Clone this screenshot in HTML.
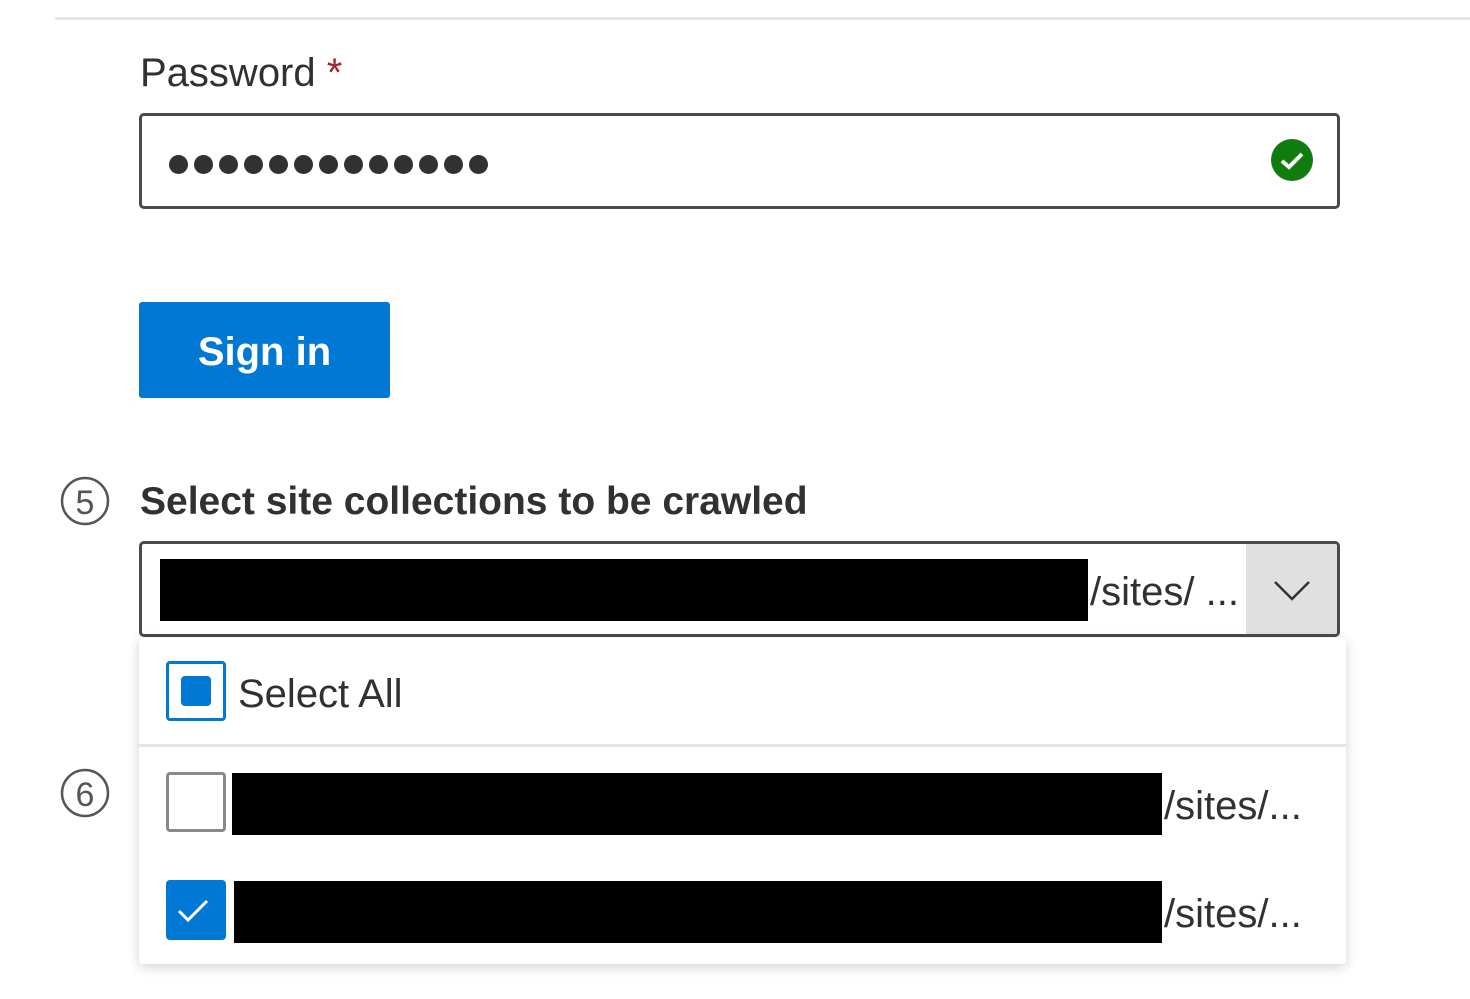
<!DOCTYPE html>
<html><head><style>
body{margin:0;width:1470px;height:999px;background:#fff;position:relative;overflow:hidden;font-family:"Segoe UI","Liberation Sans",sans-serif;color:#323130}
.a{position:absolute}
.d{display:inline-block;width:19px;height:19px;border-radius:50%;background:#323130;margin-right:6px}
</style></head><body>
<div class="a" style="left:55px;top:17px;width:1415px;height:3px;background:#e6e6e6"></div>
<div class="a" style="left:140px;top:48px;font-size:40px;line-height:50px">Password <span style="color:#a4262c">*</span></div>
<div class="a" style="left:139px;top:113px;width:1195px;height:90px;border:3px solid #4a4a4a;border-radius:5px"></div>
<div class="a" style="left:169px;top:155px;height:20px;white-space:nowrap;font-size:0"><span class="d"></span><span class="d"></span><span class="d"></span><span class="d"></span><span class="d"></span><span class="d"></span><span class="d"></span><span class="d"></span><span class="d"></span><span class="d"></span><span class="d"></span><span class="d"></span><span class="d"></span></div>
<svg class="a" style="left:1270px;top:138px" width="44" height="44"><circle cx="22" cy="22" r="21" fill="#107c10"/><path d="M12 23l7 6 13-13" stroke="#fff" stroke-width="4" fill="none"/></svg>
<div class="a" style="left:139px;top:302px;width:251px;height:96px;background:#0078d4;border-radius:3px;color:#fff;font-size:40px;font-weight:600;text-align:center;line-height:100px">Sign in</div>
<svg class="a" style="left:60px;top:476px" width="50" height="50"><circle cx="25" cy="25" r="23" fill="none" stroke="#555" stroke-width="2.5"/><text x="25" y="38" font-size="34" text-anchor="middle" fill="#555" font-family="Liberation Sans">5</text></svg>
<div class="a" style="left:140px;top:477px;font-size:39px;font-weight:600;line-height:50px">Select site collections to be crawled</div>
<div class="a" style="left:139px;top:541px;width:1195px;height:90px;border:3px solid #4a4a4a;border-radius:5px;overflow:hidden"><div class="a" style="right:0;top:0;width:91px;height:92px;background:#e0e0e0"></div></div>
<div class="a" style="left:160px;top:559px;width:928px;height:62px;background:#000"></div>
<div class="a" style="left:1090px;top:567px;font-size:40px;line-height:50px">/sites/ ...</div>
<svg class="a" style="left:1272px;top:575px" width="40" height="30"><path d="M3 7l17 17 17-17" stroke="#333" stroke-width="2.5" fill="none"/></svg>
<svg class="a" style="left:60px;top:768px" width="50" height="50"><circle cx="25" cy="25" r="23" fill="none" stroke="#555" stroke-width="2.5"/><text x="25" y="38" font-size="34" text-anchor="middle" fill="#555" font-family="Liberation Sans">6</text></svg>
<div class="a" style="left:139px;top:638px;width:1207px;height:326px;background:#fff;box-shadow:0 3px 12px rgba(0,0,0,.18);border-radius:3px"></div>
<div class="a" style="left:139px;top:744px;width:1207px;height:3px;background:#e6e6e6"></div>
<div class="a" style="left:166px;top:661px;width:54px;height:54px;border:3px solid #0078d4;border-radius:4px"><div class="a" style="left:12px;top:12px;width:30px;height:30px;background:#0078d4;border-radius:4px"></div></div>
<div class="a" style="left:238px;top:669px;font-size:40px;line-height:50px">Select All</div>
<div class="a" style="left:166px;top:772px;width:54px;height:54px;border:3px solid #8a8a8a;border-radius:4px"></div>
<div class="a" style="left:232px;top:773px;width:930px;height:62px;background:#000"></div>
<div class="a" style="left:1164px;top:781px;font-size:40px;line-height:50px">/sites/...</div>
<div class="a" style="left:166px;top:880px;width:60px;height:60px;background:#0078d4;border-radius:4px"><svg width="60" height="60"><path d="M13 31l9 9 19-19" stroke="#fff" stroke-width="3" fill="none"/></svg></div>
<div class="a" style="left:234px;top:881px;width:928px;height:62px;background:#000"></div>
<div class="a" style="left:1164px;top:889px;font-size:40px;line-height:50px">/sites/...</div>
</body></html>
